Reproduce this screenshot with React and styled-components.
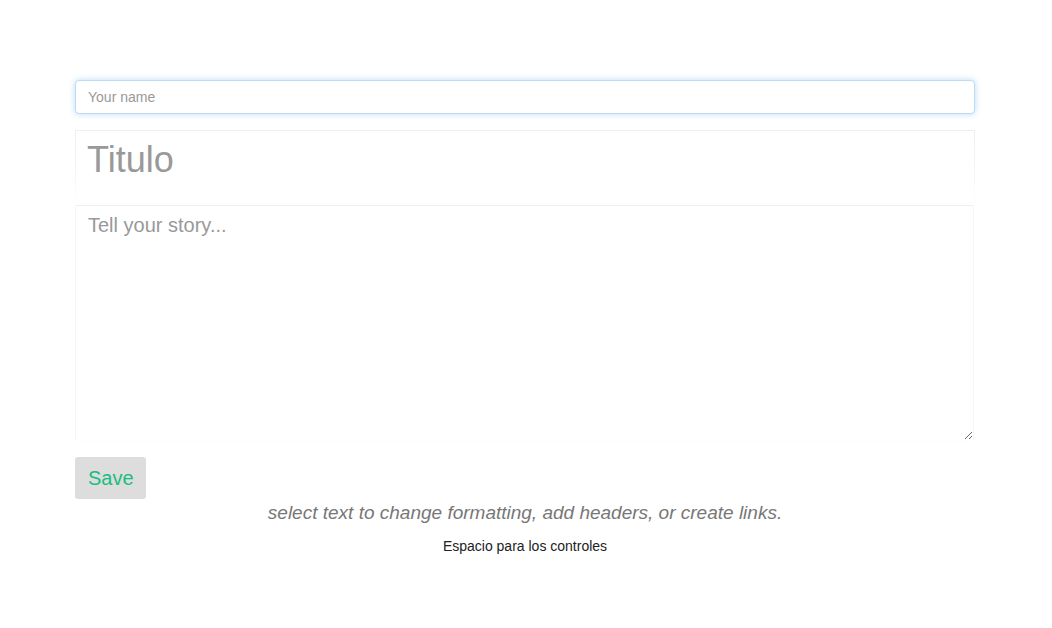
import React from "react";
import styled, { createGlobalStyle } from "styled-components";

const GlobalStyle = createGlobalStyle`
  html, body {
    margin: 0;
    padding: 0;
    background: #fff;
    font-family: "Liberation Sans", Arial, sans-serif;
  }
  * { box-sizing: border-box; }
`;

const Editor = styled.div`
  width: 900px;
  margin: 80px 0 0 75px;
  display: flex;
  flex-direction: column;
`;

const NameInput = styled.input`
  height: 34px;
  width: 100%;
  padding: 6px 12px;
  font-size: 14px;
  font-family: inherit;
  color: #555;
  border: 1px solid #bcdcf6;
  border-radius: 4px;
  outline: none;
  box-shadow: 0 0 6px rgba(102, 175, 233, 0.45);
  &::placeholder { color: #999; }
`;

const FadedBox = styled.div`
  border: 1px solid transparent;
  border-image: linear-gradient(#eeeeee, #f6f6f6 70%, rgba(255, 255, 255, 0)) 1;
`;

const TitleBox = styled(FadedBox)`
  margin-top: 16px;
  height: 70px;
  padding: 8px 12px 8px 11px;
  font-size: 36px;
  line-height: 42px;
  color: #999;
`;

const StoryBox = styled.textarea`
  margin-top: 5px;
  height: 236px;
  width: 899px;
  padding: 7px 12px 8px;
  font-family: inherit;
  font-size: 20px;
  line-height: 24px;
  color: #555;
  border: 1px solid;
  border-color: #eeeeee #f5f5f5 #fdfdfd #f5f5f5;
  border-radius: 2px;
  outline: none;
  resize: vertical;
  &::placeholder { color: #999; }
`;

const SaveButton = styled.button`
  align-self: flex-start;
  margin-top: 16px;
  height: 42px;
  padding: 0 12px 0 13px;
  font-family: inherit;
  font-size: 20px;
  color: #1bbc7f;
  background: #dddddd;
  border: none;
  border-radius: 3px;
  cursor: pointer;
`;

const Hint = styled.p`
  margin: 2px 0 0;
  text-align: center;
  font-size: 19px;
  font-style: italic;
  line-height: 24px;
  color: #777;
`;

const Controls = styled.div`
  margin-top: 11px;
  text-align: center;
  font-size: 14px;
  line-height: 20px;
  color: #222;
`;

export default function App() {
  return (
    <>
      <GlobalStyle />
      <Editor>
        <NameInput placeholder="Your name" autoFocus />
        <TitleBox>Titulo</TitleBox>
        <StoryBox placeholder="Tell your story..." />
        <SaveButton>Save</SaveButton>
        <Hint>select text to change formatting, add headers, or create links.</Hint>
        <Controls>Espacio para los controles</Controls>
      </Editor>
    </>
  );
}
